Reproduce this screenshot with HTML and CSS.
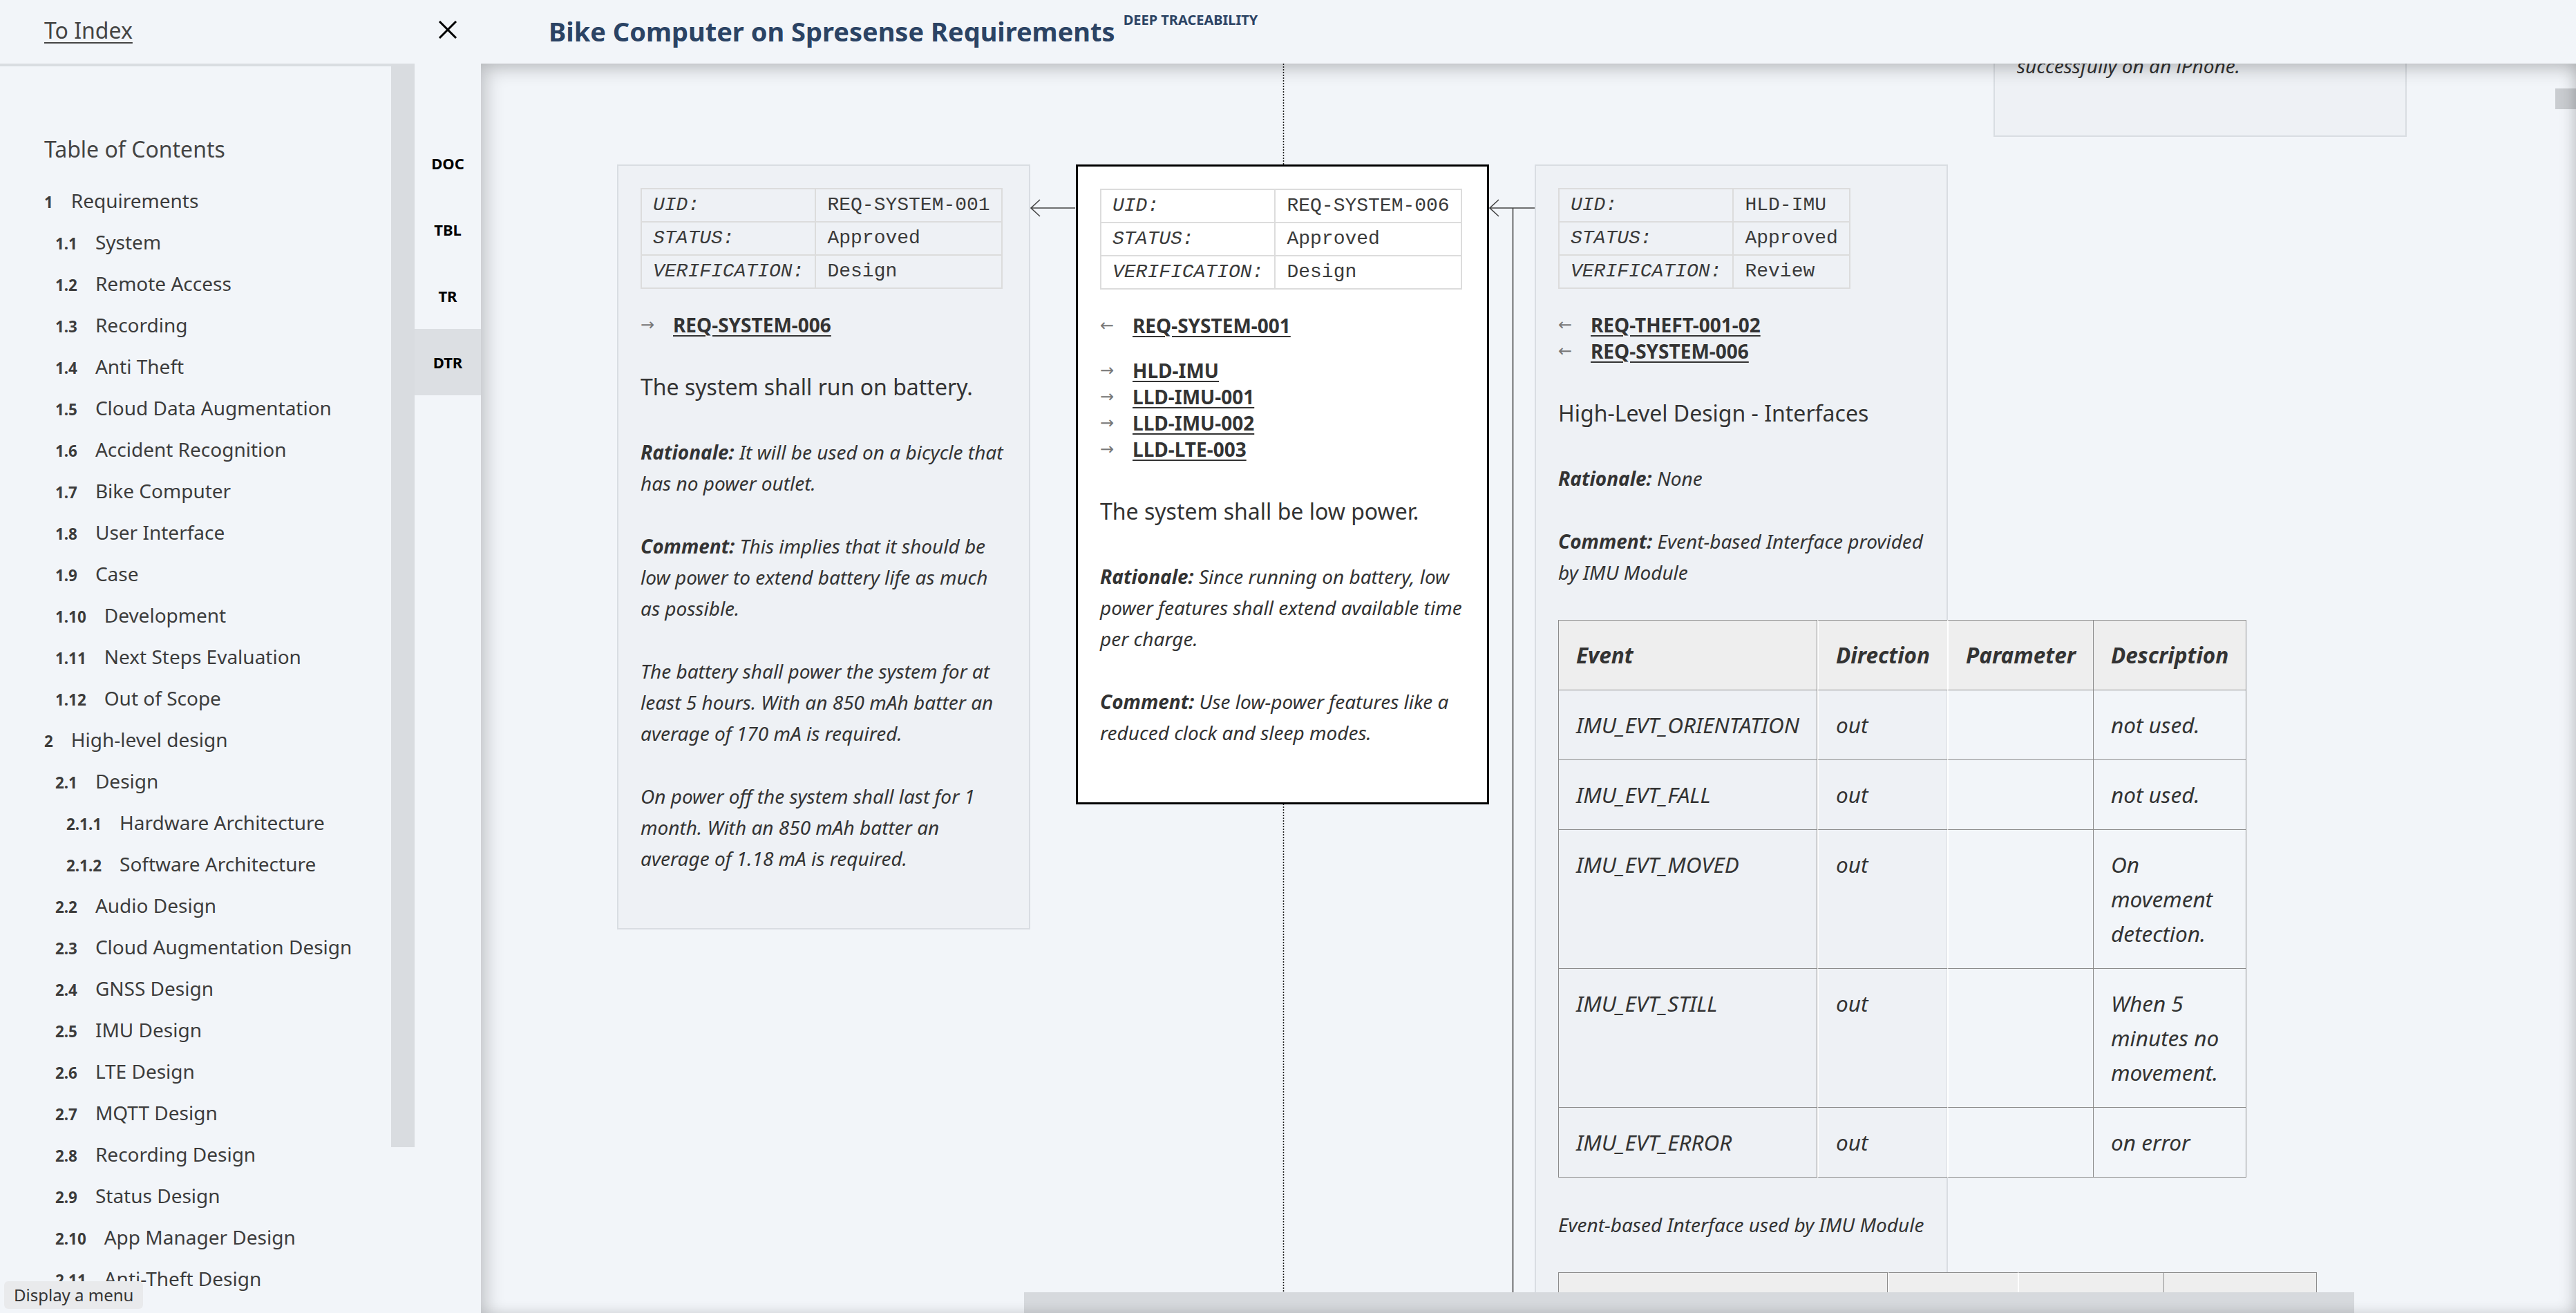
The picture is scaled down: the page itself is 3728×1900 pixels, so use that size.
FILE: index.html
```html
<!DOCTYPE html>
<html lang="en">
<head>
<meta charset="utf-8">
<title>Bike Computer on Spresense Requirements - Deep Traceability</title>
<link rel="stylesheet" href="styles.css">
</head>
<body>
<header class="header">
  <div class="header-left"><a class="to-index" href="#">To Index</a></div>
  <div class="header-close">
    <svg width="28" height="26" viewBox="0 0 28 26"><path d="M2 1 L26 25 M26 1 L2 25" stroke="#000" stroke-width="3" fill="none"/></svg>
  </div>
  <div class="title">Bike Computer on Spresense Requirements<span class="badge">DEEP TRACEABILITY</span></div>
</header>

<div class="layout">
  <nav class="toc">
    <div class="toc-title">Table of Contents</div>
    <div class="toc-item l1"><span class="num">1</span>Requirements</div>
    <div class="toc-item l2"><span class="num">1.1</span>System</div>
    <div class="toc-item l2"><span class="num">1.2</span>Remote Access</div>
    <div class="toc-item l2"><span class="num">1.3</span>Recording</div>
    <div class="toc-item l2"><span class="num">1.4</span>Anti Theft</div>
    <div class="toc-item l2"><span class="num">1.5</span>Cloud Data Augmentation</div>
    <div class="toc-item l2"><span class="num">1.6</span>Accident Recognition</div>
    <div class="toc-item l2"><span class="num">1.7</span>Bike Computer</div>
    <div class="toc-item l2"><span class="num">1.8</span>User Interface</div>
    <div class="toc-item l2"><span class="num">1.9</span>Case</div>
    <div class="toc-item l2"><span class="num">1.10</span>Development</div>
    <div class="toc-item l2"><span class="num">1.11</span>Next Steps Evaluation</div>
    <div class="toc-item l2"><span class="num">1.12</span>Out of Scope</div>
    <div class="toc-item l1"><span class="num">2</span>High-level design</div>
    <div class="toc-item l2"><span class="num">2.1</span>Design</div>
    <div class="toc-item l3"><span class="num">2.1.1</span>Hardware Architecture</div>
    <div class="toc-item l3"><span class="num">2.1.2</span>Software Architecture</div>
    <div class="toc-item l2"><span class="num">2.2</span>Audio Design</div>
    <div class="toc-item l2"><span class="num">2.3</span>Cloud Augmentation Design</div>
    <div class="toc-item l2"><span class="num">2.4</span>GNSS Design</div>
    <div class="toc-item l2"><span class="num">2.5</span>IMU Design</div>
    <div class="toc-item l2"><span class="num">2.6</span>LTE Design</div>
    <div class="toc-item l2"><span class="num">2.7</span>MQTT Design</div>
    <div class="toc-item l2"><span class="num">2.8</span>Recording Design</div>
    <div class="toc-item l2"><span class="num">2.9</span>Status Design</div>
    <div class="toc-item l2"><span class="num">2.10</span>App Manager Design</div>
    <div class="toc-item l2"><span class="num">2.11</span>Anti-Theft Design</div>
    <div class="toc-item l2"><span class="num">2.12</span>Accident Design</div>
  </nav>
  <div class="toc-rail"><div class="toc-thumb"></div></div>
  <div class="tabs">
    <div class="tab">DOC</div>
    <div class="tab">TBL</div>
    <div class="tab">TR</div>
    <div class="tab active">DTR</div>
  </div>

  <main class="main">
    <svg class="connectors" width="3032" height="1808" viewBox="0 0 3032 1808">
      <path d="M1161.5 0 V146 M1161.5 1071 V1808" stroke="#222" stroke-width="1.5" stroke-dasharray="2 2" fill="none"/>
      <path d="M796 209 H860 M809 197 L796 209 L809 221" stroke="#444" stroke-width="1.6" fill="none"/>
      <path d="M1460 209 H1525 M1473 197 L1460 209 L1473 221" stroke="#444" stroke-width="1.6" fill="none"/>
      <path d="M1493.5 209 V1808" stroke="#444" stroke-width="1.6" fill="none"/>
    </svg>

    <div class="canvas">
      <section class="card">
        <table class="meta">
          <tr><td class="k">UID:</td><td>REQ-SYSTEM-001</td></tr>
          <tr><td class="k">STATUS:</td><td>Approved</td></tr>
          <tr><td class="k">VERIFICATION:</td><td>Design</td></tr>
        </table>
        <div class="links">
          <div class="link-group">
            <div class="link-row"><span class="arr">→</span><a href="#">REQ-SYSTEM-006</a></div>
          </div>
        </div>
        <div class="statement">The system shall run on battery.</div>
        <p class="field"><b>Rationale:</b> It will be used on a bicycle that has no power outlet.</p>
        <p class="field"><b>Comment:</b> This implies that it should be low power to extend battery life as much as possible.</p>
        <p class="field">The battery shall power the system for at least 5 hours. With an 850 mAh batter an average of 170 mA is required.</p>
        <p class="field">On power off the system shall last for 1 month. With an 850 mAh batter an average of 1.18 mA is required.</p>
      </section>

      <section class="card focus">
        <table class="meta">
          <tr><td class="k">UID:</td><td>REQ-SYSTEM-006</td></tr>
          <tr><td class="k">STATUS:</td><td>Approved</td></tr>
          <tr><td class="k">VERIFICATION:</td><td>Design</td></tr>
        </table>
        <div class="links">
          <div class="link-group">
            <div class="link-row"><span class="arr">←</span><a href="#">REQ-SYSTEM-001</a></div>
          </div>
          <div class="link-group">
            <div class="link-row"><span class="arr">→</span><a href="#">HLD-IMU</a></div>
            <div class="link-row"><span class="arr">→</span><a href="#">LLD-IMU-001</a></div>
            <div class="link-row"><span class="arr">→</span><a href="#">LLD-IMU-002</a></div>
            <div class="link-row"><span class="arr">→</span><a href="#">LLD-LTE-003</a></div>
          </div>
        </div>
        <div class="statement">The system shall be low power.</div>
        <p class="field"><b>Rationale:</b> Since running on battery, low power features shall extend available time per charge.</p>
        <p class="field"><b>Comment:</b> Use low-power features like a reduced clock and sleep modes.</p>
      </section>

      <section class="card">
        <table class="meta">
          <tr><td class="k">UID:</td><td>HLD-IMU</td></tr>
          <tr><td class="k">STATUS:</td><td>Approved</td></tr>
          <tr><td class="k">VERIFICATION:</td><td>Review</td></tr>
        </table>
        <div class="links">
          <div class="link-group">
            <div class="link-row"><span class="arr">←</span><a href="#">REQ-THEFT-001-02</a></div>
            <div class="link-row"><span class="arr">←</span><a href="#">REQ-SYSTEM-006</a></div>
          </div>
        </div>
        <div class="statement">High-Level Design - Interfaces</div>
        <p class="field"><b>Rationale:</b> None</p>
        <p class="field"><b>Comment:</b> Event-based Interface provided by IMU Module</p>
        <table class="iface">
          <tr><th>Event</th><th>Direction</th><th>Parameter</th><th>Description</th></tr>
          <tr><td>IMU_EVT_ORIENTATION</td><td>out</td><td></td><td>not used.</td></tr>
          <tr><td>IMU_EVT_FALL</td><td>out</td><td></td><td>not used.</td></tr>
          <tr><td>IMU_EVT_MOVED</td><td>out</td><td></td><td>On movement detection.</td></tr>
          <tr><td>IMU_EVT_STILL</td><td>out</td><td></td><td>When 5 minutes no movement.</td></tr>
          <tr><td>IMU_EVT_ERROR</td><td>out</td><td></td><td>on error</td></tr>
        </table>
        <p class="field">Event-based Interface used by IMU Module</p>
        <table class="iface second">
          <tr><th><span class="wide">Event</span></th><th>Direction</th><th>Parameter</th><th>Description</th></tr>
          <tr><td>APP_EVT_RECORDING</td><td>in</td><td></td><td>Start recording.</td></tr>
        </table>
      </section>

      <section class="card upper">
        <p class="field"><b>Comment:</b> The app shall be tested<br>successfully on an iPhone.</p>
      </section>
    </div>

    <div class="vscroll"></div>
    <div class="hscroll"></div>
  </main>
</div>

<div class="status-bubble">Display a menu</div>
</body>
</html>
```
FILE: styles.css
```css
* { box-sizing: border-box; }

html, body {
  margin: 0;
  padding: 0;
}

body {
  width: 3728px;
  height: 1900px;
  overflow: hidden;
  position: relative;
  background: #f2f5f9;
  font-family: "Noto Sans", "Open Sans", sans-serif;
  color: #333;
}

/* Header */
.header {
  height: 92px;
  display: flex;
  align-items: center;
  padding-bottom: 6px;
  background: #f2f5f9;
}

.header-left {
  width: 600px;
  padding-left: 64px;
}

.to-index {
  font-size: 32px;
  color: #444;
  text-decoration: underline;
  text-underline-offset: 5px;
  text-decoration-thickness: 2px;
}

.header-close {
  width: 96px;
  display: flex;
  justify-content: center;
}

.title {
  padding-left: 98px;
  font-size: 38px;
  font-weight: 700;
  color: #2b4364;
  white-space: nowrap;
}

.badge {
  font-size: 20px;
  margin-left: 12px;
  vertical-align: 24px;
}

/* Layout */
.layout {
  display: flex;
  height: 1808px;
}

.toc {
  width: 566px;
  border-top: 4px solid #d9dde1;
  padding: 96px 0 0 64px;
  overflow: hidden;
  color: #3c3c3c;
}

.toc-title {
  font-size: 32px;
  line-height: 48px;
  margin-bottom: 20px;
  color: #444;
}

.toc-item {
  height: 60px;
  line-height: 60px;
  font-size: 28px;
  white-space: nowrap;
}

.toc-item .num {
  font-size: 22.4px;
  font-weight: 700;
  margin-right: 26px;
}

.toc-item.l2 { padding-left: 16px; }
.toc-item.l3 { padding-left: 32px; }

.toc-rail {
  width: 34px;
}

.toc-thumb {
  height: 1568px;
  background: #d9dce0;
}

.tabs {
  width: 96px;
  padding-top: 96px;
}

.tab {
  height: 96px;
  display: flex;
  align-items: center;
  justify-content: center;
  font-size: 22px;
  font-weight: 700;
  color: #000;
}

.tab.active {
  background: #dcdfe3;
}

/* Main */
.main {
  flex: 1;
  position: relative;
  overflow: hidden;
}

.main::after {
  content: "";
  position: absolute;
  inset: 0;
  pointer-events: none;
  box-shadow: inset 8px 8px 26px rgba(0, 0, 0, 0.2), inset -10px 0 24px -8px rgba(0, 0, 0, 0.16);
}

.connectors {
  position: absolute;
  left: 0;
  top: 0;
}

.canvas {
  position: relative;
  display: grid;
  grid-template-columns: repeat(4, 598px);
  column-gap: 66px;
  align-items: start;
  padding: 146px 0 0 197px;
}

.card {
  background: #eef1f5;
  border: 2px solid #d9dde2;
  padding: 32px;
}

.card.focus {
  background: #fff;
  border: 3px solid #000;
}

.card.upper {
  margin-top: -244px;
}

.meta {
  border-collapse: collapse;
  font-family: "Liberation Mono", monospace;
  font-size: 28px;
  color: #3a3a3a;
  margin-bottom: 33px;
}

.meta td {
  border: 2px solid #dcdcdc;
  padding: 6px 16px;
  line-height: 34px;
  white-space: nowrap;
}

.meta td.k {
  font-style: italic;
}

.links {
  margin-bottom: 45px;
}

.link-group + .link-group {
  margin-top: 27px;
}

.link-row {
  height: 38px;
  display: flex;
  align-items: center;
  font-size: 28px;
  line-height: 38px;
  font-weight: 700;
}

.link-row a {
  color: #333;
  text-decoration: underline;
  text-underline-offset: 4px;
  text-decoration-thickness: 2px;
}

.arr {
  width: 47px;
  flex: none;
  font-family: "DejaVu Sans", sans-serif;
  font-size: 24px;
  line-height: 1;
  font-weight: 400;
  color: #777;
}

.statement {
  font-size: 32px;
  line-height: 51px;
  margin-bottom: 47px;
}

.field {
  margin: 0 0 46px 0;
  font-size: 28px;
  line-height: 45px;
  font-style: italic;
}

.field b {
  font-weight: 700;
}

/* Interface tables */
.iface {
  border-collapse: separate;
  border-spacing: 0;
  font-size: 31.5px;
  line-height: 50px;
  font-style: italic;
  margin-bottom: 46px;
  color: #333;
}

.iface th,
.iface td {
  padding: 25px;
  text-align: left;
  vertical-align: top;
  border-top: 1px solid #8c8c8c;
}

.iface th {
  background: #eeeeee;
  font-weight: 700;
}

.iface tr > :nth-child(1) {
  border-left: 1px solid #8c8c8c;
  border-right: 1px solid #8c8c8c;
}

.iface tr > :nth-child(2),
.iface tr > :nth-child(3) {
  border-left: 2px solid #fff;
}

.iface tr > :nth-child(4) {
  border-left: 1px solid #8c8c8c;
  border-right: 1px solid #8c8c8c;
}

.iface tr:last-child > * {
  border-bottom: 1px solid #8c8c8c;
}

.iface .wide {
  display: block;
  width: 425px;
}

/* Scrollbars and overlays */
.vscroll {
  position: absolute;
  right: 0;
  top: 36px;
  width: 30px;
  height: 30px;
  background: #c9ccd0;
}

.hscroll {
  position: absolute;
  left: 786px;
  bottom: 0;
  width: 1925px;
  height: 30px;
  background: #d6d9dd;
}

.status-bubble {
  position: absolute;
  left: 6px;
  bottom: 6px;
  height: 40px;
  padding: 0 14px;
  line-height: 40px;
  font-size: 24px;
  color: #333;
  background: #e9eaec;
  border-radius: 6px;
}
```
